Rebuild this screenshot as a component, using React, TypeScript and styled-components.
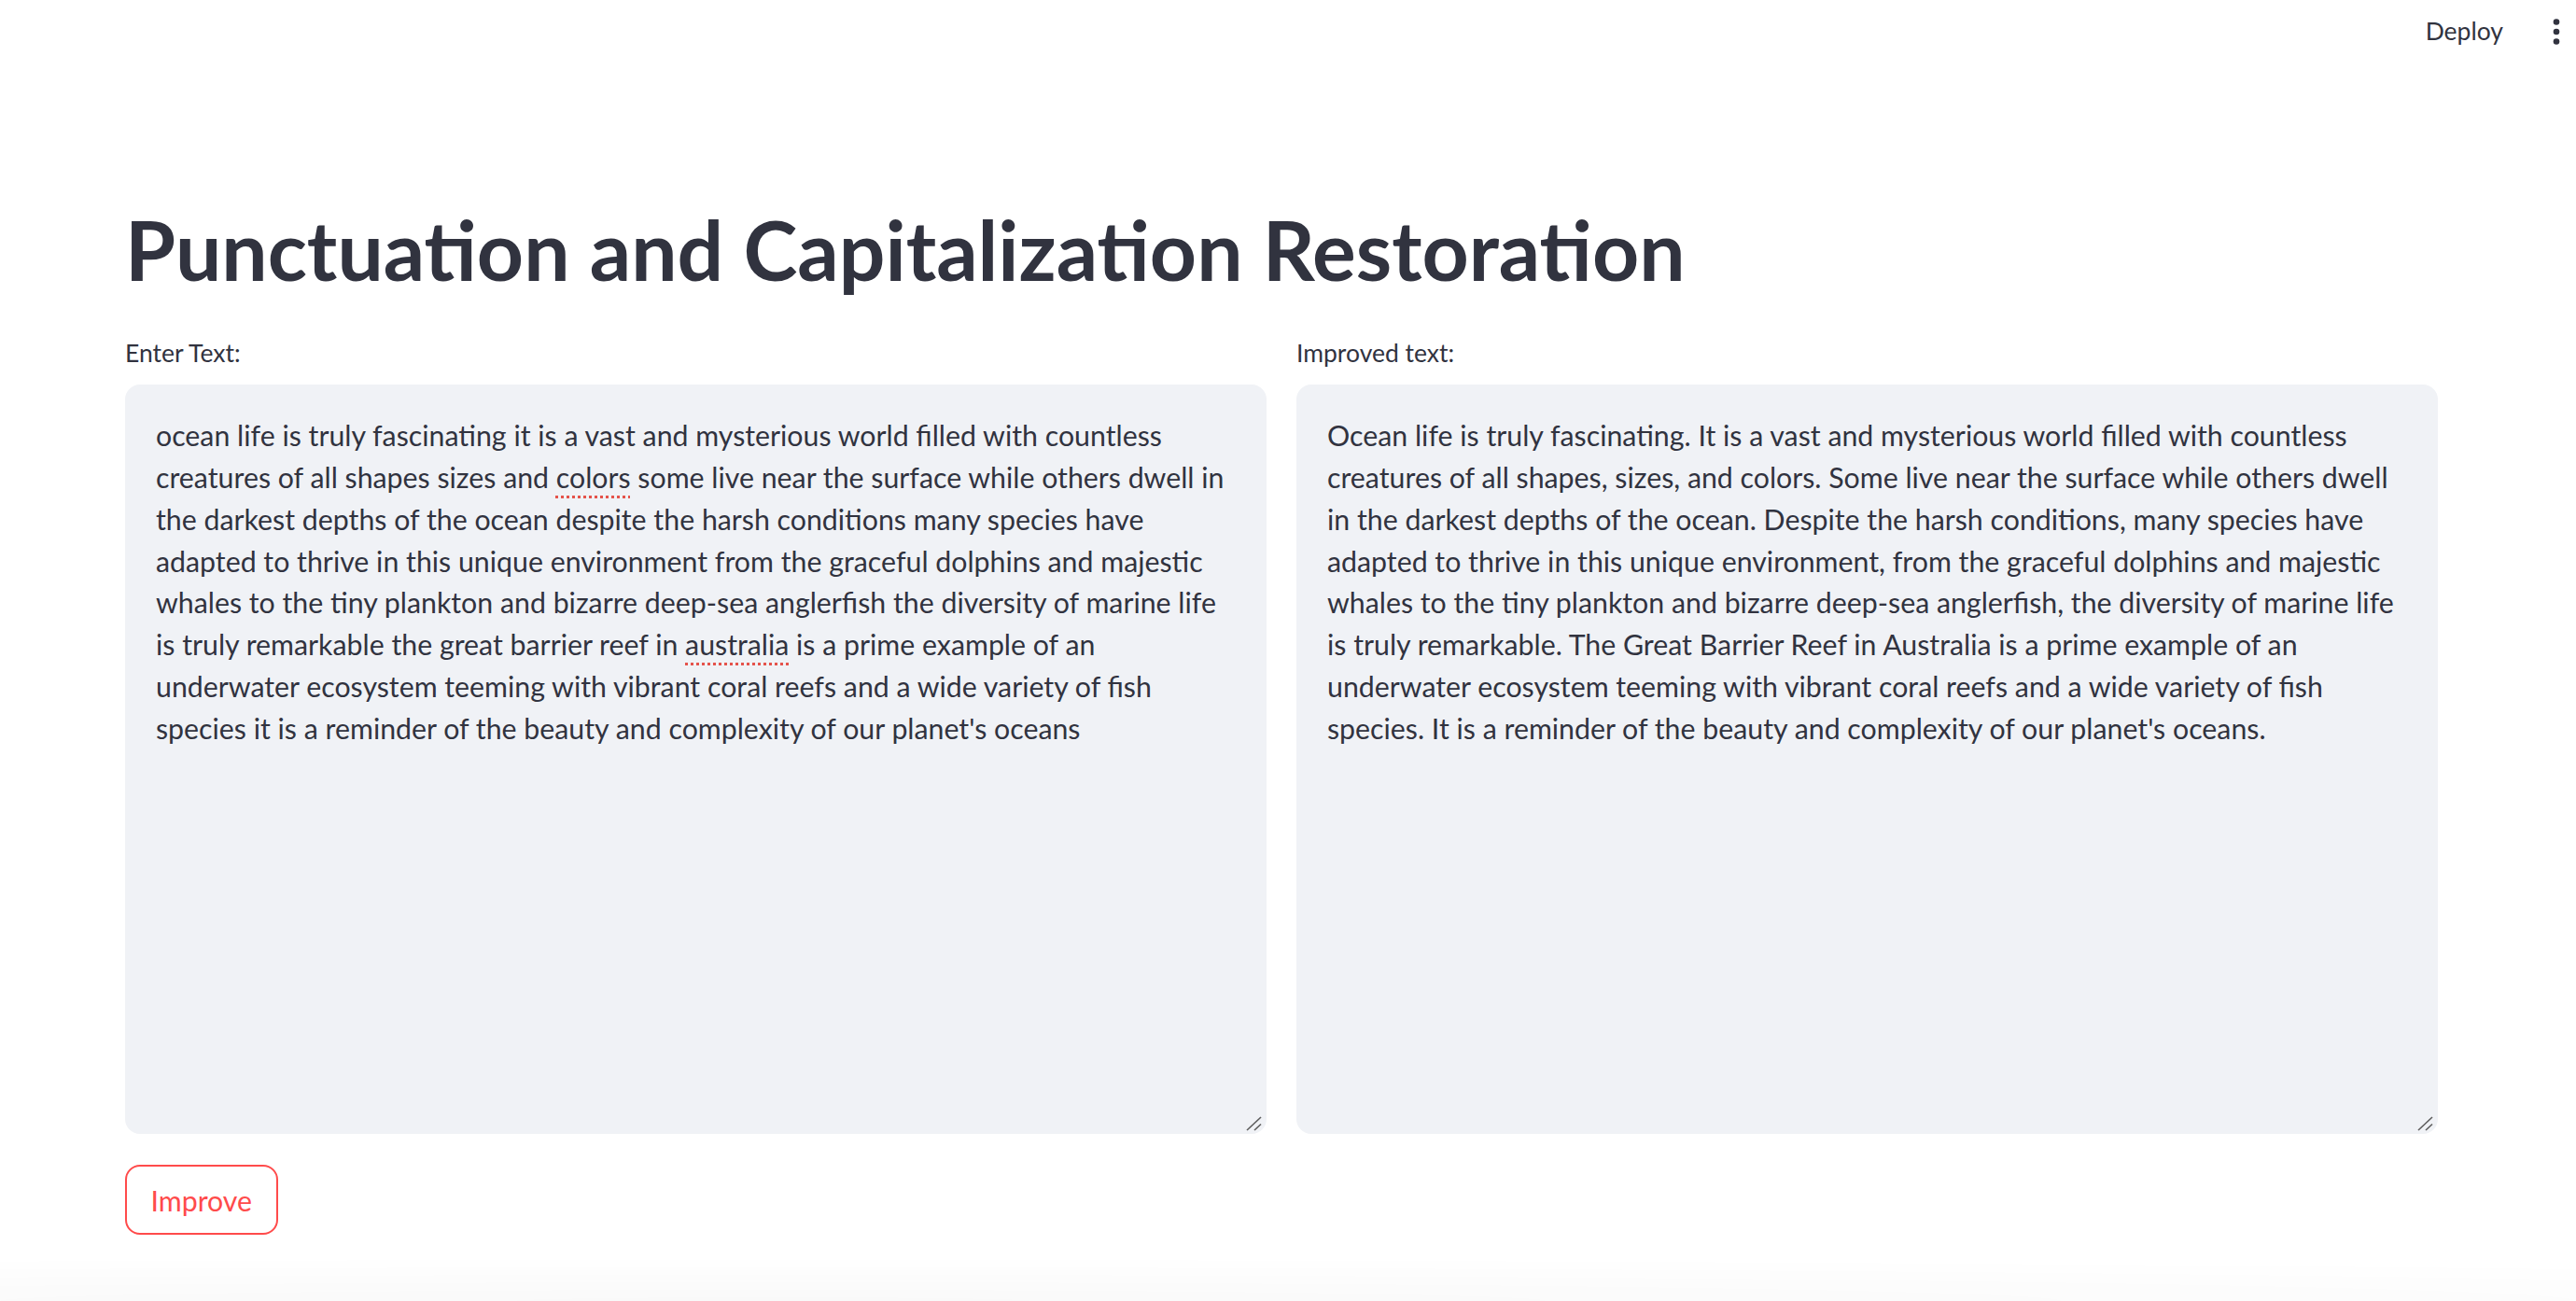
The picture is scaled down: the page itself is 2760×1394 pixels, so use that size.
import React from "react";
import styled, { createGlobalStyle } from "styled-components";

const Global = createGlobalStyle`
  html, body { margin: 0; padding: 0; background: #ffffff; }
  body { font-family: Lato, "Liberation Sans", sans-serif; color: #31333f; }
  * { box-sizing: border-box; }
`;

const Page = styled.div`
  min-height: 1394px;
  display: flex;
  flex-direction: column;
  background: #ffffff;
`;

const Header = styled.header`
  height: 68px;
  display: flex;
  align-items: center;
  justify-content: flex-end;
  padding-right: 17px;
  gap: 53px;
`;

const DeployButton = styled.button`
  border: none;
  background: transparent;
  font-family: Lato, "Liberation Sans", sans-serif;
  font-size: 26.5px;
  line-height: 1.2;
  color: #31333f;
  padding: 0;
  cursor: pointer;
`;

const MenuButton = styled.button`
  border: none;
  background: transparent;
  padding: 0;
  width: 8px;
  height: 30px;
  display: flex;
  align-items: center;
  justify-content: center;
`;

const Main = styled.main`
  padding: 147px 148px 0 134px;
  display: flex;
  flex-direction: column;
`;

const Title = styled.h1`
  margin: 0;
  font-family: Lato, "Liberation Sans", sans-serif;
  font-weight: 700;
  font-size: 87.5px;
  line-height: 105.6px;
  color: #31333f;
`;

const Columns = styled.div`
  margin-top: 41px;
  display: grid;
  grid-template-columns: minmax(0, 1fr) minmax(0, 1fr);
  gap: 32px;
`;

const Column = styled.div`
  display: flex;
  flex-direction: column;
  min-width: 0;
`;

const Label = styled.label`
  font-size: 26.5px;
  line-height: 33.6px;
  color: #31333f;
  margin-bottom: 17px;
`;

const Field = styled.div`
  position: relative;
  height: 803px;
  background: #f0f2f6;
  border: 2px solid #f0f2f6;
  border-radius: 16px;
  padding: 30px 31px;
  font-size: 30.3px;
  line-height: 44.8px;
  color: #31333f;
  overflow: hidden;
`;

const Line = styled.div`
  white-space: nowrap;
`;

const Misspelled = styled.span`
  text-decoration: underline dotted #e5534b;
  text-decoration-thickness: 3px;
  text-underline-offset: 8px;
`;

const Grip = styled.svg`
  position: absolute;
  right: 2px;
  bottom: 1px;
`;

const ImproveButton = styled.button`
  margin-top: 33px;
  align-self: flex-start;
  height: 75px;
  padding: 0 25.5px;
  border: 2px solid #ff4b4b;
  border-radius: 16px;
  background: #ffffff;
  color: #ff4b4b;
  font-family: Lato, "Liberation Sans", sans-serif;
  font-size: 30.3px;
  cursor: pointer;
`;

const BottomFade = styled.div`
  position: fixed;
  left: 0;
  right: 0;
  bottom: 0;
  height: 48px;
  pointer-events: none;
  background: radial-gradient(120% 100% at 30% 100%, rgba(0, 0, 0, 0.025), rgba(0, 0, 0, 0));
`;

type Seg = string | { bad: string };

const inputLines: Seg[][] = [
  ["ocean life is truly fascinating it is a vast and mysterious world filled with countless"],
  ["creatures of all shapes sizes and ", { bad: "colors" }, " some live near the surface while others dwell in"],
  ["the darkest depths of the ocean despite the harsh conditions many species have"],
  ["adapted to thrive in this unique environment from the graceful dolphins and majestic"],
  ["whales to the tiny plankton and bizarre deep-sea anglerfish the diversity of marine life"],
  ["is truly remarkable the great barrier reef in ", { bad: "australia" }, " is a prime example of an"],
  ["underwater ecosystem teeming with vibrant coral reefs and a wide variety of fish"],
  ["species it is a reminder of the beauty and complexity of our planet's oceans"],
];

const outputLines: Seg[][] = [
  ["Ocean life is truly fascinating. It is a vast and mysterious world filled with countless"],
  ["creatures of all shapes, sizes, and colors. Some live near the surface while others dwell"],
  ["in the darkest depths of the ocean. Despite the harsh conditions, many species have"],
  ["adapted to thrive in this unique environment, from the graceful dolphins and majestic"],
  ["whales to the tiny plankton and bizarre deep-sea anglerfish, the diversity of marine life"],
  ["is truly remarkable. The Great Barrier Reef in Australia is a prime example of an"],
  ["underwater ecosystem teeming with vibrant coral reefs and a wide variety of fish"],
  ["species. It is a reminder of the beauty and complexity of our planet's oceans."],
];

const ResizeGrip = () => (
  <Grip width="18" height="16" viewBox="0 0 18 16">
    <path d="M1 15 L16 1" stroke="#5c5c5c" strokeWidth="1.6" />
    <path d="M9 15 L16 8.5" stroke="#5c5c5c" strokeWidth="1.6" />
  </Grip>
);

const TextBox = ({ lines }: { lines: Seg[][] }) => (
  <Field>
    {lines.map((segs, i) => (
      <Line key={i}>
        {segs.map((s, j) =>
          typeof s === "string" ? <React.Fragment key={j}>{s}</React.Fragment> : <Misspelled key={j}>{s.bad}</Misspelled>
        )}
      </Line>
    ))}
    <ResizeGrip />
  </Field>
);

export default function App() {
  return (
    <Page>
      <Global />
      <Header>
        <DeployButton>Deploy</DeployButton>
        <MenuButton aria-label="Main menu">
          <svg width="8" height="30" viewBox="0 0 8 30">
            <circle cx="4" cy="4.5" r="3.3" fill="#31333f" />
            <circle cx="4" cy="15" r="3.3" fill="#31333f" />
            <circle cx="4" cy="25.5" r="3.3" fill="#31333f" />
          </svg>
        </MenuButton>
      </Header>
      <Main>
        <Title>Punctuation and Capitalization Restoration</Title>
        <Columns>
          <Column>
            <Label>Enter Text:</Label>
            <TextBox lines={inputLines} />
          </Column>
          <Column>
            <Label>Improved text:</Label>
            <TextBox lines={outputLines} />
          </Column>
        </Columns>
        <ImproveButton>Improve</ImproveButton>
      </Main>
      <BottomFade />
    </Page>
  );
}
